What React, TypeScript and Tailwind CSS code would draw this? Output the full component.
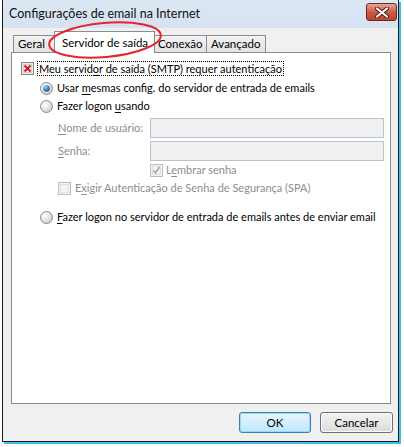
import React from "react";

const font = { fontFamily: '"Lato", "Liberation Sans", sans-serif' };

function U({ children }: { children: React.ReactNode }) {
  return <span className="underline underline-offset-2">{children}</span>;
}

function Radio({ on }: { on?: boolean }) {
  return (
    <svg width="13" height="13" viewBox="0 0 13 13" className="shrink-0">
      <defs>
        <radialGradient id="rbg" cx="0.35" cy="0.35" r="0.8">
          <stop offset="0" stopColor="#ffffff" />
          <stop offset="1" stopColor="#c9c9c9" />
        </radialGradient>
        <radialGradient id="rdot" cx="0.35" cy="0.3" r="0.8">
          <stop offset="0" stopColor="#9fd6f7" />
          <stop offset="0.6" stopColor="#2a7dc4" />
          <stop offset="1" stopColor="#1b4f8a" />
        </radialGradient>
      </defs>
      <circle cx="6.5" cy="6.5" r="6" fill="url(#rbg)" stroke="#8a8a8a" />
      {on && <circle cx="6.5" cy="6.5" r="3.3" fill="url(#rdot)" />}
    </svg>
  );
}

function Check({ mark, disabled }: { mark?: "x" | "v"; disabled?: boolean }) {
  return (
    <svg width="13" height="13" viewBox="0 0 13 13" className="shrink-0">
      <rect x="0.5" y="0.5" width="12" height="12" fill={disabled ? "#f4f4f4" : "#e8e8e8"} stroke={disabled ? "#bcbcbc" : "#8a8a8a"} />
      <rect x="2.5" y="2.5" width="8" height="8" fill={disabled ? "#f4f4f4" : "#f6f6f6"} stroke={disabled ? "#e0e0e0" : "#cfcfcf"} />
      {mark === "x" && (
        <path d="M3.5 3.5 L9.5 9.5 M9.5 3.5 L3.5 9.5" stroke="#d8141c" strokeWidth="2" />
      )}
      {mark === "v" && (
        <path d="M3.5 6.5 L5.5 9 L9.5 3" stroke="#a0a0a0" strokeWidth="1.4" fill="none" />
      )}
    </svg>
  );
}

export default function App() {
  return (
    <div className="w-[404px] h-[447px] bg-white overflow-hidden text-[11px] text-black whitespace-nowrap" style={font}>
      <div className="ml-[2px] w-[397px] h-[442px] border-l border-r border-b border-[#1c1c1c] shadow-[2px_2px_0_#3fbfe9] flex flex-col bg-[#f0f0f0]">
        {/* title bar */}
        <div className="h-[28px] flex items-center justify-between bg-gradient-to-b from-[#dce7f4] to-[#d6e2f0] pl-[6px] pr-[1px]">
          <span className="text-[12.5px] text-[#111]">Configurações de email na Internet</span>
          <div className="w-[31px] h-[18px] mb-[4px] rounded-[3px] border border-[#6b2a22] bg-gradient-to-b from-[#e6a795] via-[#cc5a45] to-[#c0412f] flex items-center justify-center">
            <svg width="14" height="11" viewBox="0 0 14 11">
              <path d="M2 1.5 L12 9.5 M12 1.5 L2 9.5" stroke="#4a1a14" strokeWidth="4" strokeLinecap="round" />
              <path d="M2 1.5 L12 9.5 M12 1.5 L2 9.5" stroke="#ffffff" strokeWidth="2.2" strokeLinecap="round" />
            </svg>
          </div>
        </div>

        {/* tabs */}
        <div className="relative h-[24px] flex items-end pl-[10px] text-[11.5px]">
          <div className="h-[17px] px-[4px] flex items-center border border-b-0 border-[#898c95] bg-gradient-to-b from-[#f3f3f3] to-[#e3e3e3] w-[42px]">Geral</div>
          <div className="h-[22px] -mb-px px-[7px] flex items-center border border-b-0 border-[#898c95] bg-white w-[101px] z-10 -ml-px">Servidor de saída</div>
          <div className="h-[17px] px-[3px] flex items-center border border-b-0 border-l-0 border-[#898c95] bg-gradient-to-b from-[#f3f3f3] to-[#e3e3e3] w-[52px]">Conexão</div>
          <div className="h-[17px] px-[4px] flex items-center border border-b-0 border-l-0 border-[#898c95] bg-gradient-to-b from-[#f3f3f3] to-[#e3e3e3] w-[59px]">Avançado</div>
          <svg className="absolute left-[39px] top-[-10px] z-20" width="130" height="44" viewBox="0 0 130 44">
            <ellipse cx="63" cy="22" rx="56" ry="17" fill="none" stroke="#e5242b" strokeWidth="2" transform="rotate(-5 63 22)" />
          </svg>
        </div>

        {/* panel */}
        <div className="ml-[8px] w-[380px] h-[352px] border border-[#898c95] bg-white flex flex-col">
          <div className="mt-[7px] ml-[9px] h-[16px] flex items-center gap-[4px]">
            <Check mark="x" />
            <span className="px-[1px] outline outline-1 outline-dotted outline-black leading-[13px]">
              Meu servid<U>o</U>r de saída (SMTP) requer autenticação
            </span>
          </div>
          <div className="mt-[4px] ml-[28px] h-[16px] flex items-center gap-[4px]">
            <Radio on />
            <span>Usar <U>m</U>esmas config. do servidor de entrada de emails</span>
          </div>
          <div className="mt-[2px] ml-[28px] h-[16px] flex items-center gap-[4px]">
            <Radio />
            <span>Fazer logon <U>u</U>sando</span>
          </div>
          <div className="mt-[4px] ml-[46px] h-[20px] flex items-center text-[#8d8d8d]">
            <span className="w-[92px]"><U>N</U>ome de usuário:</span>
            <div className="w-[234px] h-[20px] border border-[#b5c3d3] bg-[#f0f0f0]" />
          </div>
          <div className="mt-[3px] ml-[46px] h-[20px] flex items-center text-[#8d8d8d]">
            <span className="w-[92px]"><U>S</U>enha:</span>
            <div className="w-[234px] h-[20px] border border-[#b5c3d3] bg-[#f0f0f0]" />
          </div>
          <div className="mt-[1px] ml-[138px] h-[16px] flex items-center gap-[3px] text-[#8d8d8d]">
            <Check mark="v" disabled />
            <span>L<U>e</U>mbrar senha</span>
          </div>
          <div className="mt-[2px] ml-[46px] h-[16px] flex items-center gap-[4px] text-[#8d8d8d]">
            <Check disabled />
            <span>E<U>x</U>igir Autenticação de Senha de Segurança (SPA)</span>
          </div>
          <div className="mt-[13px] ml-[28px] h-[16px] flex items-center gap-[4px]">
            <Radio />
            <span><U>F</U>azer logon no servidor de entrada de emails antes de enviar email</span>
          </div>
        </div>

        {/* buttons */}
        <div className="mt-[8px] flex justify-end gap-[9px] pr-[5px] text-[11.5px]">
          <button className="w-[72px] h-[21px] rounded-[3px] border border-[#3c7fb1] bg-gradient-to-b from-[#eaf6fd] to-[#bee6fd] shadow-[inset_0_0_0_1px_#9ad6f5]">OK</button>
          <button className="w-[73px] h-[21px] rounded-[3px] border border-[#707070] bg-gradient-to-b from-[#f2f2f2] to-[#dcdcdc] shadow-[inset_0_0_0_1px_#fbfbfb]">Cancelar</button>
        </div>
      </div>
    </div>
  );
}
